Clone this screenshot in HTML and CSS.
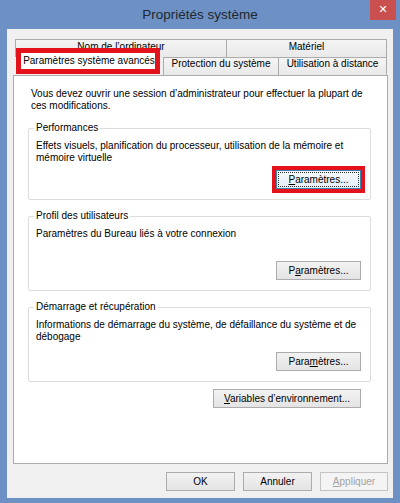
FILE: index.html
```html
<!DOCTYPE html>
<html lang="fr">
<head>
  <meta charset="UTF-8" />
  <title>Propriétés système</title>
  <link rel="stylesheet" href="styles.css">
</head>
<body>
  <div class="window">
    <div class="titlebar">
      <span></span>
      <h1 class="title">Propriétés système</h1>
      <button class="close" aria-label="Fermer">✕</button>
    </div>

    <div class="client">
      <div class="tabs">
        <div class="tab-row back">
          <div class="tab tab-name">Nom de l’ordinateur</div>
          <div class="tab tab-hw">Matériel</div>
        </div>
        <div class="tab-row front">
          <div class="tab selected">Paramètres système avancés</div>
          <div class="tab tab-protect">Protection du système</div>
          <div class="tab tab-remote">Utilisation à distance</div>
        </div>

        <div class="panel">
          <p class="intro">Vous devez ouvrir une session d’administrateur pour effectuer la plupart de<br>ces modifications.</p>

          <fieldset class="group compact">
            <legend>Performances</legend>
            <p class="desc">Effets visuels, planification du processeur, utilisation de la mémoire et<br>mémoire virtuelle</p>
            <div class="actions">
              <span class="highlight">
                <button class="btn focused"><u>P</u>aramètres...</button>
              </span>
            </div>
          </fieldset>

          <fieldset class="group">
            <legend>Profil des utilisateurs</legend>
            <p class="desc">Paramètres du Bureau liés à votre connexion</p>
            <div class="actions">
              <button class="btn">P<u>a</u>ramètres...</button>
            </div>
          </fieldset>

          <fieldset class="group">
            <legend>Démarrage et récupération</legend>
            <p class="desc">Informations de démarrage du système, de défaillance du système et de<br>débogage</p>
            <div class="actions">
              <button class="btn">Para<u>m</u>ètres...</button>
            </div>
          </fieldset>

          <div class="env-row">
            <button class="btn btn-env"><u>V</u>ariables d’environnement...</button>
          </div>
        </div>
      </div>

      <div class="footer">
        <button class="btn btn-ok">OK</button>
        <button class="btn btn-ok">Annuler</button>
        <button class="btn btn-apply" disabled><u>A</u>ppliquer</button>
      </div>
    </div>
  </div>
</body>
</html>
```

FILE: styles.css
```css
* {
  box-sizing: border-box;
}

body {
  margin: 0;
  font-family: 'Liberation Sans', Arial, sans-serif;
  font-size: 10px;
  color: #000;
}

.window {
  width: 400px;
  height: 503px;
  background-color: #6d91c4;
  display: flex;
  flex-direction: column;
  padding: 0 7px 5px 7px;
}

.titlebar {
  height: 29px;
  margin: 0 -7px;
  display: grid;
  grid-template-columns: 1fr auto 1fr;
}

.title {
  margin: 0;
  font-size: 13.5px;
  font-weight: normal;
  line-height: 29px;
  color: #20272f;
}

.close {
  justify-self: end;
  align-self: start;
  width: 26px;
  height: 20px;
  margin-right: 4px;
  padding: 0;
  border: none;
  background-color: #c9504e;
  color: #fff;
  font-family: 'DejaVu Sans', sans-serif;
  font-size: 11px;
  font-weight: bold;
  line-height: 20px;
}

.client {
  flex: 1;
  background-color: #f0f0f0;
  display: flex;
  flex-direction: column;
  padding: 10px 5px 7px 6px;
}

.tabs {
  flex: 1;
  display: flex;
  flex-direction: column;
}

.tab-row {
  display: flex;
  height: 18px;
  margin: 0 1px 0 2px;
}

.tab {
  border: 1px solid #acacac;
  border-bottom: none;
  background: linear-gradient(#f4f4f4, #e9e9e9);
  text-align: center;
  white-space: nowrap;
}

.back .tab {
  line-height: 14px;
}

.tab-name {
  width: 212px;
}

.tab-hw {
  flex: 1;
  border-left: none;
}

.front .tab {
  line-height: 12px;
}

.front .selected {
  position: relative;
  z-index: 1;
  align-self: flex-start;
  width: 144px;
  height: 26px;
  margin: -9px 0 0 1px;
  border: 5px solid #e3121b;
  background: #fff;
  line-height: 16px;
  padding-left: 2px;
}

.tab-protect {
  width: 116px;
  margin-left: 3px;
}

.tab-remote {
  flex: 1;
  border-left: none;
}

.panel {
  flex: 1;
  background-color: #fff;
  border: 1px solid #acacac;
  padding: 0 16px 0 14px;
}

.intro {
  margin: 12px 0 0 3px;
  line-height: 12px;
  white-space: nowrap;
}

.group {
  margin: 10px 0 0;
  padding: 0 9px 10px 7px;
  border: 1px solid #dcdcdc;
  border-radius: 2px;
}

.group legend {
  padding: 0 2px;
  margin-left: -2px;
  line-height: 12px;
}

.desc {
  margin: 6px 0 0;
  min-height: 24px;
  line-height: 12px;
  white-space: nowrap;
}

.actions {
  display: flex;
  justify-content: flex-end;
  margin-top: 9px;
}

.compact .actions {
  margin-top: 6px;
}

.highlight {
  display: inline-flex;
  border: 4px solid #e3121b;
  margin: -4px;
}

.btn {
  height: 19px;
  width: 85px;
  padding: 0;
  border: 1px solid #acacac;
  background: linear-gradient(#f2f2f2, #e4e4e4);
  font-family: inherit;
  font-size: 10px;
  color: #000;
  line-height: 17px;
}

.btn.focused {
  border-color: #3c7fb1;
  background: linear-gradient(#f5f9fd, #e3eef9);
  outline: 1px dotted #333;
  outline-offset: -3px;
}

.env-row {
  display: flex;
  justify-content: flex-end;
  margin-top: 7px;
  padding-right: 10px;
}

.btn-env {
  width: 148px;
}

.footer {
  display: flex;
  justify-content: flex-end;
  gap: 8px;
  margin-top: 8px;
}

.btn-ok {
  width: 69px;
}

.btn-apply {
  width: 68px;
  border-color: #c4c4c4;
  background: #f4f4f4;
  color: #a3a3a3;
}
```
